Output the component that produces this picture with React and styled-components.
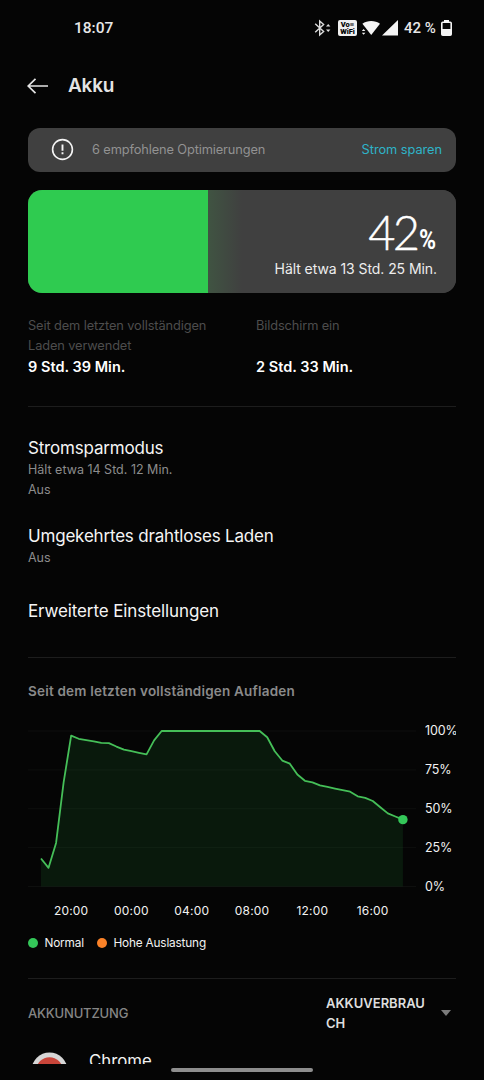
import React from 'react';
import styled, { createGlobalStyle } from 'styled-components';

const GlobalStyle = createGlobalStyle`
  * {
    box-sizing: border-box;
  }
  body {
    margin: 0;
    background: #050505;
    font-family: Inter, 'Liberation Sans', sans-serif;
    color: #f2f2f2;
  }
`;

const Screen = styled.div`
  width: 484px;
  height: 1080px;
  background: #050505;
  overflow: hidden;
  display: flex;
  flex-direction: column;
`;

const StatusBar = styled.div`
  height: 56px;
  flex: none;
  padding: 0 32px 0 74px;
  display: flex;
  align-items: center;
  justify-content: space-between;
  font-family: Roboto, sans-serif;
  font-weight: 500;
  font-size: 16px;
  color: #e8e8e8;
`;

const Clock = styled.span`
  font-size: 15.5px;
`;

const StatusIcons = styled.div`
  display: flex;
  align-items: center;

  svg {
    display: block;
  }
`;

const StatusPercent = styled.span`
  width: 33px;
  margin: 0 4px 0 6px;
  font-size: 15px;
  white-space: nowrap;
`;

const VoWifi = styled.div`
  width: 19px;
  height: 16px;
  margin: 0 3px 0 7px;
  padding-top: 1px;
  border-radius: 2px;
  background: #f0f0f0;
  color: #050505;
  font-size: 7.5px;
  font-weight: 900;
  line-height: 7px;
  text-align: center;
`;

const Header = styled.header`
  height: 60px;
  flex: none;
  padding-left: 27px;
  display: flex;
  align-items: center;
  gap: 20px;
`;

const Title = styled.h1`
  margin: 0;
  font-size: 19px;
  font-weight: 600;
  line-height: 24px;
  letter-spacing: -0.2px;
  color: #e4e4e4;
`;

const Content = styled.main`
  height: 948px;
  flex: none;
  padding: 12px 28px 0;
  overflow: hidden;
`;

const Banner = styled.div`
  height: 44px;
  padding: 0 14px 1px 23px;
  display: flex;
  align-items: center;
  border-radius: 12px;
  background: #404040;
  font-size: 12.8px;
`;

const BannerText = styled.span`
  flex: 1;
  margin-left: 18px;
  letter-spacing: -0.12px;
  color: #929292;
`;

const BannerAction = styled.span`
  letter-spacing: -0.05px;
  color: #2eb4c9;
`;

const BatteryCard = styled.div`
  height: 103px;
  margin-top: 18px;
  border-radius: 14px;
  overflow: hidden;
  display: flex;
  background: #404040;
`;

const BatteryFill = styled.div`
  flex: none;
  background: #2fcb50;
`;

const BatteryInfo = styled.div`
  flex: 1;
  padding: 16px 19px 0 0;
  display: flex;
  flex-direction: column;
  align-items: flex-end;
  background: linear-gradient(90deg, #405442 0, #404040 34px);
`;

const Level = styled.div`
  height: 53px;
  display: flex;
  align-items: baseline;
  font-family: Lato, sans-serif;
  font-size: 47px;
  font-weight: 300;
  line-height: 53px;
  letter-spacing: -2.9px;
  -webkit-text-stroke: 0.4px #fff;
  color: #fff;
`;

const LevelUnit = styled.span`
  width: 18px;
  margin-left: 2px;
  font-family: Roboto, sans-serif;
  font-size: 27.5px;
  font-weight: 700;
  letter-spacing: 0;
  -webkit-text-stroke: 0;
  transform: translateY(-1.5px) scaleX(0.84);
  transform-origin: left;
`;

const Remaining = styled.div`
  font-size: 14px;
  line-height: 20px;
  letter-spacing: -0.07px;
  white-space: nowrap;
  color: #ededed;
`;

const Stats = styled.div`
  height: 114px;
  padding-top: 23px;
  display: grid;
  grid-template-columns: 228px 1fr;
  border-bottom: 1px solid #1d1d1d;
`;

const StatLabel = styled.div`
  height: 41px;
  font-size: 12.8px;
  line-height: 19.5px;
  letter-spacing: -0.11px;
  color: #4d4d4d;
`;

const StatValue = styled.div`
  font-size: 14.5px;
  font-weight: 600;
  line-height: 20px;
  letter-spacing: 0.02px;
  color: #fff;
`;

const Settings = styled.div`
  height: 251px;
  padding-top: 30px;
  border-bottom: 1px solid #1d1d1d;
`;

const Setting = styled.div`
  height: ${(p) => p.$height}px;
`;

const SettingTitle = styled.div`
  font-size: 17px;
  line-height: 23px;
  letter-spacing: ${(p) => p.$spacing || '-0.19px'};
  color: #f5f5f5;
`;

const SettingNote = styled.div`
  font-size: 12.5px;
  line-height: 20px;
  color: #8c8c8c;
`;

const ChartSection = styled.section`
  height: 321px;
  padding-top: 23px;
  border-bottom: 1px solid #1d1d1d;
`;

const ChartTitle = styled.h2`
  margin: 0 0 22px;
  font-size: 13.5px;
  font-weight: 600;
  line-height: 20px;
  letter-spacing: 0.2px;
  color: #8a8a8a;
`;

const ChartRow = styled.div`
  display: flex;

  svg {
    flex: none;
    display: block;
  }
`;

const YAxis = styled.div`
  height: 172px;
  width: 31px;
  margin-left: 9px;
  overflow: hidden;
  display: flex;
  flex-direction: column;
  justify-content: space-between;
  font-size: 12.5px;
  line-height: 16px;
  letter-spacing: -0.1px;
`;

const XAxis = styled.div`
  margin: 8px 0 0 13px;
  display: grid;
  grid-template-columns: repeat(6, 60.3px);
  font-size: 12px;
  line-height: 16px;
  letter-spacing: 0.2px;
  text-align: center;
`;

const Legend = styled.div`
  margin-top: 16px;
  display: flex;
  align-items: center;
  gap: 13px;
  font-size: 11.8px;
  line-height: 16px;
  letter-spacing: -0.17px;
`;

const LegendItem = styled.span`
  display: flex;
  align-items: center;
  gap: 6.5px;

  &::before {
    content: '';
    width: 10px;
    height: 10px;
    border-radius: 50%;
    background: ${(p) => p.$color};
  }
`;

const UsageHeader = styled.div`
  height: 68px;
  padding-right: 5px;
  display: flex;
  align-items: center;
  font-size: 13px;
  line-height: 20px;
`;

const UsageTitle = styled.span`
  flex: 1;
  font-weight: 500;
  letter-spacing: -0.18px;
  color: #858585;
`;

const UsageSelect = styled.span`
  width: 102px;
  margin-right: 13px;
  font-weight: 600;
  color: #dedede;
  word-break: break-all;
`;

const AppRow = styled.div`
  padding: 5px 0 0 3px;
  display: flex;
  gap: 21px;
  font-size: 16.8px;
  line-height: 18px;
`;

const NavArea = styled.div`
  flex: 1;
  padding-top: 4px;
  display: flex;
  justify-content: center;
`;

const NavPill = styled.div`
  width: 142px;
  height: 4px;
  border-radius: 2px;
  background: #8e8e8e;
`;

// battery level in percent, one value for each half hour
const levels = [
  18, 12, 28, 67, 97, 95, 94.2, 93.4, 92.4, 92.2, 90, 88, 87, 86, 85, 94,
  100, 100, 100, 100, 100, 100, 100, 100, 100, 100, 100, 100, 100, 100,
  96, 87, 81, 79, 72, 68, 67, 65, 64, 63, 62, 61, 58, 57, 55, 51, 47, 45, 43,
];
const hours = ['20:00', '00:00', '04:00', '08:00', '12:00', '16:00'];

const chartX = (i) => 13 + i * 7.54;
const chartY = (level) => 163.5 - level * 1.555;

const Chart = () => {
  const points = levels.map((l, i) => `${chartX(i)},${chartY(l)}`).join(' ');
  const last = levels.length - 1;

  return (
    <svg width="388" height="172" viewBox="0 0 388 172">
      {[0, 25, 50, 75, 100].map((l) => (
        <path key={l} d={`M0 ${chartY(l)}H388`} stroke="#0e0f0e" />
      ))}
      <polygon
        points={`${chartX(0)},${chartY(0)} ${points} ${chartX(last)},${chartY(0)}`}
        fill="#2fcb50"
        fillOpacity="0.1"
      />
      <polyline points={points} fill="none" stroke="#45bf58" strokeWidth="1.8" strokeLinejoin="round" />
      <circle cx={chartX(last)} cy={chartY(levels[last])} r="4.7" fill="#34c759" />
    </svg>
  );
};

const App = () => {
  return (
    <>
      <GlobalStyle />
      <Screen>
        <StatusBar>
          <Clock>18:07</Clock>
          <StatusIcons>
            <svg width="17" height="18" viewBox="0 0 17 18" fill="none" stroke="#ddd" strokeWidth="1.4">
              <path d="M1.2 4.8 9.6 12.6 5.7 16V2L9.6 5.4 1.2 13.2" />
              <path d="m12 7.4 2.2-2.4 2.2 2.4zM12 10.6l2.2 2.4 2.2-2.4z" fill="#ddd" stroke="none" />
            </svg>
            <VoWifi>
              Vo≡
              <br />
              WiFi
            </VoWifi>
            <svg width="38" height="16" viewBox="0 0 38 16" fill="#f4f4f4">
              <path d="M2.4 3.8C7.2.1 15.2.1 20 3.8L11.2 15z" />
              <path d="m1.8 11 1.8-2 1.8 2zM1.8 12.8l1.8 2 1.8-2zM38 0V15.5H22z" />
            </svg>
            <StatusPercent>42 %</StatusPercent>
            <svg width="11" height="16" viewBox="0 0 11 16">
              <path d="M3 0h5v2H3z" fill="#f4f4f4" />
              <rect x=".8" y="2.3" width="9.4" height="12.9" rx="1" fill="none" stroke="#f4f4f4" strokeWidth="1.6" />
              <path d="M1 9h9v6H1z" fill="#f4f4f4" />
            </svg>
          </StatusIcons>
        </StatusBar>
        <Header>
          <svg width="21" height="16" viewBox="0 0 21 16" fill="none" stroke="#e4e4e4" strokeWidth="1.7">
            <path d="M8.5.8 1.2 8l7.3 7.2M1.2 8H21" />
          </svg>
          <Title>Akku</Title>
        </Header>
        <Content>
          <Banner>
            <svg width="23" height="23" viewBox="0 0 23 23" fill="none" stroke="#f4f4f4">
              <circle cx="11.5" cy="11.5" r="9.9" strokeWidth="1.6" />
              <path d="M11.5 6.5v6.2M11.5 14.2v2" strokeWidth="1.9" />
            </svg>
            <BannerText>6 empfohlene Optimierungen</BannerText>
            <BannerAction>Strom sparen</BannerAction>
          </Banner>
          <BatteryCard>
            <BatteryFill style={{ width: '42%' }} />
            <BatteryInfo>
              <Level>
                42<LevelUnit>%</LevelUnit>
              </Level>
              <Remaining>Hält etwa 13 Std. 25 Min.</Remaining>
            </BatteryInfo>
          </BatteryCard>
          <Stats>
            <div>
              <StatLabel>
                Seit dem letzten vollständigen
                <br />
                Laden verwendet
              </StatLabel>
              <StatValue>9 Std. 39 Min.</StatValue>
            </div>
            <div>
              <StatLabel>Bildschirm ein</StatLabel>
              <StatValue>2 Std. 33 Min.</StatValue>
            </div>
          </Stats>
          <Settings>
            <Setting $height={88}>
              <SettingTitle>Stromsparmodus</SettingTitle>
              <SettingNote>Hält etwa 14 Std. 12 Min.</SettingNote>
              <SettingNote>Aus</SettingNote>
            </Setting>
            <Setting $height={75}>
              <SettingTitle>Umgekehrtes drahtloses Laden</SettingTitle>
              <SettingNote>Aus</SettingNote>
            </Setting>
            <Setting $height={57}>
              <SettingTitle $spacing="-0.12px">Erweiterte Einstellungen</SettingTitle>
            </Setting>
          </Settings>
          <ChartSection>
            <ChartTitle>Seit dem letzten vollständigen Aufladen</ChartTitle>
            <ChartRow>
              <Chart />
              <YAxis>
                <span>100%</span>
                <span>75%</span>
                <span>50%</span>
                <span>25%</span>
                <span>0%</span>
              </YAxis>
            </ChartRow>
            <XAxis>
              {hours.map((h) => (
                <span key={h}>{h}</span>
              ))}
            </XAxis>
            <Legend>
              <LegendItem $color="#34c759">Normal</LegendItem>
              <LegendItem $color="#fb8228">Hohe Auslastung</LegendItem>
            </Legend>
          </ChartSection>
          <UsageHeader>
            <UsageTitle>AKKUNUTZUNG</UsageTitle>
            <UsageSelect>AKKUVERBRAUCH</UsageSelect>
            <svg width="10" height="6" viewBox="0 0 10 6">
              <path d="M0 0h10L5 6z" fill="#7c7c7c" />
            </svg>
          </UsageHeader>
          <AppRow>
            <svg width="37" height="37" viewBox="0 0 37 37">
              <circle cx="18.5" cy="18.5" r="18" fill="#d6d6d6" />
              <circle cx="18.5" cy="18.5" r="13.3" fill="#c9453a" />
            </svg>
            <span>Chrome</span>
          </AppRow>
        </Content>
        <NavArea>
          <NavPill />
        </NavArea>
      </Screen>
    </>
  );
};

export default App;
